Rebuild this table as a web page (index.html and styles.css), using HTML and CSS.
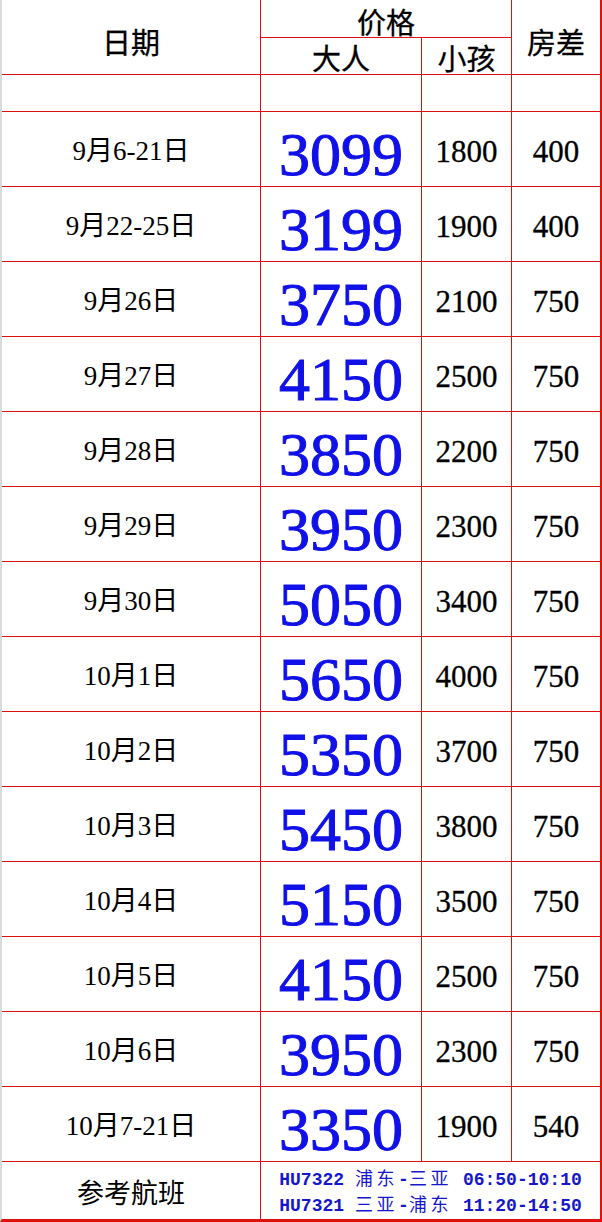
FILE: index.html
```html
<!DOCTYPE html>
<html lang="zh-CN">
<head>
<meta charset="utf-8">
<title>价格表</title>
<link rel="stylesheet" href="styles.css">
</head>
<body>
<div class="sheet">
  <div class="c hd h-date">日期</div>
  <div class="c hd h-price">价格</div>
  <div class="c hd h-room r">房差</div>
  <div class="c hd h-adult">大人</div>
  <div class="c hd h-child">小孩</div>

  <div class="c"></div><div class="c"></div><div class="c"></div><div class="c r"></div>

  <div class="c date">9月6-21日</div><div class="c big">3099</div><div class="c num">1800</div><div class="c num r">400</div>
  <div class="c date">9月22-25日</div><div class="c big">3199</div><div class="c num">1900</div><div class="c num r">400</div>
  <div class="c date">9月26日</div><div class="c big">3750</div><div class="c num">2100</div><div class="c num r">750</div>
  <div class="c date">9月27日</div><div class="c big">4150</div><div class="c num">2500</div><div class="c num r">750</div>
  <div class="c date">9月28日</div><div class="c big">3850</div><div class="c num">2200</div><div class="c num r">750</div>
  <div class="c date">9月29日</div><div class="c big">3950</div><div class="c num">2300</div><div class="c num r">750</div>
  <div class="c date">9月30日</div><div class="c big">5050</div><div class="c num">3400</div><div class="c num r">750</div>
  <div class="c date">10月1日</div><div class="c big">5650</div><div class="c num">4000</div><div class="c num r">750</div>
  <div class="c date">10月2日</div><div class="c big">5350</div><div class="c num">3700</div><div class="c num r">750</div>
  <div class="c date">10月3日</div><div class="c big">5450</div><div class="c num">3800</div><div class="c num r">750</div>
  <div class="c date">10月4日</div><div class="c big">5150</div><div class="c num">3500</div><div class="c num r">750</div>
  <div class="c date">10月5日</div><div class="c big">4150</div><div class="c num">2500</div><div class="c num r">750</div>
  <div class="c date">10月6日</div><div class="c big">3950</div><div class="c num">2300</div><div class="c num r">750</div>
  <div class="c date">10月7-21日</div><div class="c big">3350</div><div class="c num">1900</div><div class="c num r">540</div>

  <div class="c foot-label">参考航班</div>
  <div class="c foot-info r">
    <div class="flight">HU7322 <span class="cjk">浦东</span>-<span class="cjk">三亚</span> 06:50-10:10</div>
    <div class="flight">HU7321 <span class="cjk">三亚</span>-<span class="cjk">浦东</span> 11:20-14:50</div>
  </div>
</div>
</body>
</html>
```

FILE: styles.css
```css
* {
  box-sizing: border-box;
}

html, body {
  margin: 0;
  padding: 0;
  background: #ffffff;
}

.sheet {
  width: 602px;
  height: 1222px;
  display: grid;
  grid-template-columns: 259px 161px 90px 88px;
  grid-template-rows: 38px 37px 37px repeat(14, 75px) 57px;
  border-left: 2px solid #dadada;
  border-right: 2px solid #e01010;
  border-bottom: 3px solid #e01010;
  background: #ffffff;
}

.c {
  display: flex;
  align-items: center;
  justify-content: center;
  border-right: 1px solid #e01010;
  border-bottom: 1px solid #e01010;
  color: #000000;
  white-space: nowrap;
  line-height: 1;
}

.c.r {
  border-right: none;
}

.hd {
  font-family: "Noto Sans CJK SC", sans-serif;
  font-size: 29px;
  -webkit-text-stroke: 0.3px #000000;
}

.h-date {
  grid-row: 1 / 3;
  grid-column: 1;
  padding-top: 8px;
}

.h-price {
  grid-row: 1;
  grid-column: 2 / 4;
  padding-top: 5px;
}

.h-room {
  grid-row: 1 / 3;
  grid-column: 4;
  padding-top: 8px;
}

.h-adult {
  grid-row: 2;
  grid-column: 2;
  padding-top: 2px;
}

.h-child {
  grid-row: 2;
  grid-column: 3;
  padding-top: 2px;
}

.date {
  font-family: "Liberation Serif", "Noto Sans CJK SC", serif;
  font-size: 27px;
  padding-top: 5px;
}

.big {
  font-family: "Liberation Serif", serif;
  font-size: 62px;
  color: #1010e8;
  -webkit-text-stroke: 1px #1010e8;
  padding-top: 10px;
}

.num {
  font-family: "Liberation Serif", serif;
  font-size: 31px;
  -webkit-text-stroke: 0.3px #000000;
  padding-top: 5px;
}

.foot-label {
  border-bottom: none;
  font-family: "Noto Sans CJK SC", sans-serif;
  font-size: 27px;
  padding-top: 2px;
}

.foot-info {
  grid-column: 2 / 5;
  border-bottom: none;
  flex-direction: column;
  align-items: center;
  justify-content: center;
  color: #1616cc;
  font-family: "Liberation Mono", "Noto Sans CJK SC", monospace;
  font-size: 18px;
  font-weight: 700;
  line-height: 23px;
  padding-top: 2px;
}

.flight .cjk {
  font-family: "Noto Sans CJK SC", sans-serif;
  font-weight: 400;
  letter-spacing: 3.6px;
}
```
